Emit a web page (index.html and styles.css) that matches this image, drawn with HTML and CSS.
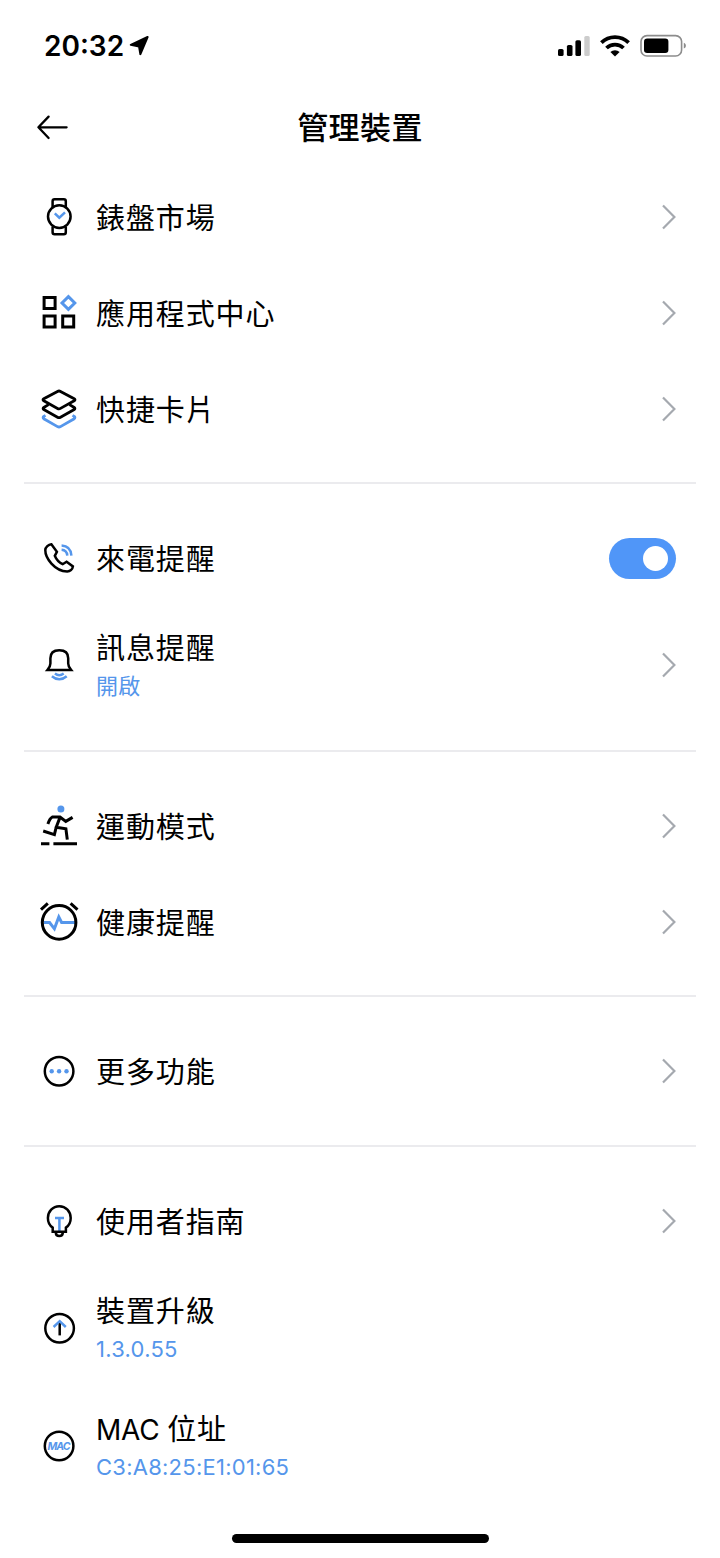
FILE: index.html
```html
<!DOCTYPE html>
<html lang="zh-Hant">
<head>
  <meta charset="UTF-8">
  <title>管理裝置</title>
  <link rel="stylesheet" href="styles.css">
</head>
<body>
  <!-- Status bar -->
  <div class="status-bar">
    <span class="time">20:32</span>
    <svg class="location" width="20" height="20" viewBox="0 0 20 20">
      <path d="M18.6 1 L11.4 18.2 L10 10.4 L1.8 8.8 Z" />
    </svg>
    <svg class="signal" width="32" height="20" viewBox="0 0 32 20">
      <rect x="0" y="13" width="5.6" height="7" rx="1.6" />
      <rect x="8.9" y="9" width="5.6" height="11" rx="1.6" />
      <rect x="17.4" y="4.2" width="5.6" height="15.8" rx="1.6" />
      <rect class="dim" x="26.3" y="0" width="5.4" height="20" rx="1.6" />
    </svg>
    <svg class="wifi" width="30" height="22" viewBox="0 0 30 22">
      <path class="wave" d="M1.4 7.7 A19.5 19.5 0 0 1 28.6 7.7" />
      <path class="wave" d="M6.5 13 A12.2 12.2 0 0 1 23.5 13" />
      <path d="M15 21.6 L10.4 17 A6.6 6.6 0 0 1 19.6 17 Z" />
    </svg>
    <svg class="battery" width="46" height="24" viewBox="0 0 46 24">
      <rect class="shell" x="1" y="1.6" width="40.6" height="20.4" rx="6" />
      <rect x="4" y="4.6" width="24.4" height="14.4" rx="3.2" />
      <path class="cap" d="M43.8 8.8 C46.6 10 46.6 13.4 43.8 14.6 Z" />
    </svg>
  </div>

  <!-- Header -->
  <div class="header">
    <svg class="back" width="32" height="26" viewBox="0 0 32 26">
      <path d="M12.6 2.6 L2.4 13.3 L12.6 24 M2.4 13.3 H30.6" />
    </svg>
    <h1>管理裝置</h1>
  </div>

  <!-- Settings list -->
  <div class="section">
    <a class="row">
      <svg class="icon" viewBox="0 0 40 40">
        <circle cx="20.3" cy="19.6" r="11.3" />
        <path d="M13.6 10 V4.2 Q13.6 2.2 15.6 2.2 H24.8 Q26.8 2.2 26.8 4.2 V10 M13.6 29.4 V35.2 Q13.6 37.2 15.6 37.2 H24.8 Q26.8 37.2 26.8 35.2 V29.4" />
        <path class="blue" d="M15.8 16.4 L20.3 20.7 L26 15.4" />
      </svg>
      <span class="label">錶盤市場</span>
      <svg class="chevron" viewBox="0 0 16 26"><path d="M2 1.4 L13.4 13 L2 24.6" /></svg>
    </a>
    <a class="row">
      <svg class="icon thick" viewBox="0 0 40 40">
        <rect x="5.1" y="4.5" width="11" height="11" />
        <rect x="5.1" y="23" width="11" height="11" />
        <rect x="23.7" y="23" width="11" height="11" />
        <path class="blue" d="M29.4 3.6 L35.8 10 L29.4 16.4 L23 10 Z" />
      </svg>
      <span class="label">應用程式中心</span>
      <svg class="chevron" viewBox="0 0 16 26"><path d="M2 1.4 L13.4 13 L2 24.6" /></svg>
    </a>
    <a class="row">
      <svg class="icon layers" viewBox="0 0 40 40">
        <path class="blue" d="M6.5 26.4 L4.8 27.4 Q3.4 28.6 4.8 29.8 L18.5 37.6 Q20 38.4 21.5 37.6 L35.2 29.8 Q36.6 28.6 35.2 27.4 L33.5 26.4" />
        <path d="M9.5 15.6 L4.8 18.5 Q3.4 19.5 4.8 20.5 L18.5 28.2 Q20 29 21.5 28.2 L35.2 20.5 Q36.6 19.5 35.2 18.5 L30.5 15.6" />
        <path d="M18.5 2.4 Q20 1.6 21.5 2.4 L35.2 9.8 Q36.8 10.8 35.2 11.8 L21.5 19.4 Q20 20.2 18.5 19.4 L4.8 11.8 Q3.2 10.8 4.8 9.8 Z" />
      </svg>
      <span class="label">快捷卡片</span>
      <svg class="chevron" viewBox="0 0 16 26"><path d="M2 1.4 L13.4 13 L2 24.6" /></svg>
    </a>
  </div>

  <div class="section">
    <div class="row">
      <svg class="icon" viewBox="0 0 40 40">
        <path d="M12.4 6.2 C9.5 6.4 6.4 9 6.3 12 C6.2 20 15.5 33 28.2 33.5 C31 33.3 33.6 31.4 33.9 28.4 L27.6 23.8 L23.7 26.2 C20 24.5 17.3 21.5 15.8 17.8 L17.9 13.8 Z" />
        <path class="blue" d="M22.6 7.5 C28.5 7.8 32 11.6 32.4 17.6 M22.6 11.8 C26 12 28 14.2 28.3 17.6" />
      </svg>
      <span class="label">來電提醒</span>
      <span class="switch"></span>
    </div>
    <a class="row tall">
      <svg class="icon" viewBox="0 0 40 40">
        <path d="M8.4 25 C10 23 11.4 21.5 11.4 18.5 V13.2 C11.4 8 14.8 5.2 20.3 5.2 C25.8 5.2 29.2 8 29.2 13.2 V18.5 C29.2 21.5 30.6 23 32.2 25 Z" />
        <path class="blue" d="M15.9 28.6 Q20.3 31.8 24.7 28.6 M12.9 31.2 Q20.3 37.4 27.7 31.2" />
      </svg>
      <span class="label">訊息提醒<small>開啟</small></span>
      <svg class="chevron" viewBox="0 0 16 26"><path d="M2 1.4 L13.4 13 L2 24.6" /></svg>
    </a>
  </div>

  <div class="section">
    <a class="row">
      <svg class="icon thick" viewBox="0 0 40 40">
        <circle class="blue-fill" cx="21.9" cy="3.1" r="3.5" />
        <path d="M8.9 18 C10 14.5 11.2 12.2 13.4 11 L21 11 L26.8 15.4 L33.6 11.4 M21 11.4 L17.2 21.2 L26.9 22.8 L28.3 33.6 M17.2 21.2 L15.4 28.6 L4.2 25" />
        <path d="M2 37.8 H10.4 M14.4 37.8 H38" />
      </svg>
      <span class="label">運動模式</span>
      <svg class="chevron" viewBox="0 0 16 26"><path d="M2 1.4 L13.4 13 L2 24.6" /></svg>
    </a>
    <a class="row">
      <svg class="icon thick" viewBox="0 0 40 40">
        <path class="blue" d="M5 20.5 H10.6 L15.4 26.8 L19.8 15 L22.6 20.5 H36" />
        <circle cx="20.1" cy="20.4" r="16.8" />
        <path d="M2 7.6 L8.8 1.4 M31.6 1.4 L38.5 7.6" />
      </svg>
      <span class="label">健康提醒</span>
      <svg class="chevron" viewBox="0 0 16 26"><path d="M2 1.4 L13.4 13 L2 24.6" /></svg>
    </a>
  </div>

  <div class="section">
    <a class="row">
      <svg class="icon" viewBox="0 0 40 40">
        <circle cx="20.1" cy="20.2" r="14.3" />
        <g class="blue-fill">
          <circle cx="12.7" cy="20.2" r="2.2" />
          <circle cx="20.1" cy="20.2" r="2.2" />
          <circle cx="27.5" cy="20.2" r="2.2" />
        </g>
      </svg>
      <span class="label">更多功能</span>
      <svg class="chevron" viewBox="0 0 16 26"><path d="M2 1.4 L13.4 13 L2 24.6" /></svg>
    </a>
  </div>

  <div class="section">
    <a class="row">
      <svg class="icon" viewBox="0 0 40 40">
        <path class="blue" d="M16 17 H25 M20.4 17 V30" />
        <path d="M13.7 30.8 V26.6 C10.4 24.4 8.9 21.2 8.9 17 C8.9 10.4 13.8 5.2 20.3 5.2 C26.8 5.2 31.7 10.4 31.7 17 C31.7 21.2 30.2 24.4 26.9 26.6 V30.8 Z" />
        <path d="M16.8 31.6 C17 36.2 23.6 36.2 23.8 31.6" />
      </svg>
      <span class="label">使用者指南</span>
      <svg class="chevron" viewBox="0 0 16 26"><path d="M2 1.4 L13.4 13 L2 24.6" /></svg>
    </a>
    <div class="row tall">
      <svg class="icon" viewBox="0 0 40 40">
        <circle cx="20.6" cy="20.2" r="14.3" />
        <path d="M20.7 14 V27.4" />
        <path class="blue" d="M14.6 19 L20.7 13.2 L26.8 19" />
      </svg>
      <span class="label">裝置升級<small>1.3.0.55</small></span>
    </div>
    <div class="row tall">
      <svg class="icon" viewBox="0 0 40 40">
        <circle cx="20.1" cy="20" r="14.3" />
        <text x="20" y="23.8" textLength="23">MAC</text>
      </svg>
      <span class="label"><span class="latin">MAC </span>位址<small>C3:A8:25:E1:01:65</small></span>
    </div>
  </div>

  <div class="home-bar"></div>
</body>
</html>
```
FILE: styles.css
```css
* {
  box-sizing: border-box;
}

body {
  display: flex;
  flex-direction: column;
  height: 1558px;
  margin: 0;
  background: #fff;
  color: #000;
  font-family: Inter, "Noto Sans CJK TC", sans-serif;
}

svg {
  flex: none;
}

.status-bar {
  display: flex;
  align-items: center;
  height: 92px;
  padding: 0 34px 0 44px;
}

.time {
  width: 85px;
  font-size: 28px;
  font-weight: 600;
}

.location {
  stroke: #000;
  stroke-width: 2;
  stroke-linejoin: round;
}

.signal {
  margin-left: auto;
}

.signal .dim {
  fill: #ccc;
}

.wifi {
  margin: 0 10px;
}

.wifi .wave {
  fill: none;
  stroke: #000;
  stroke-width: 3.8;
}

.battery .shell {
  fill: none;
  stroke: #8c8c8c;
  stroke-width: 1.6;
}

.battery .cap {
  fill: #8c8c8c;
}

.header {
  display: grid;
  grid-template-columns: 60px 1fr 60px;
  align-items: center;
  height: 76.5px;
  padding: 0 36px 6px;
}

.back {
  fill: none;
  stroke: #000;
  stroke-width: 2.3;
  stroke-linecap: round;
  stroke-linejoin: round;
}

h1 {
  margin: -3px 0 0;
  font-size: 31px;
  font-weight: 500;
  letter-spacing: 0.4px;
  text-align: center;
}

.section {
  margin: 0 24px;
  padding-bottom: 25.5px;
}

.section + .section {
  padding-top: 26px;
  border-top: 2px solid #ebebee;
}

.row {
  display: flex;
  align-items: center;
  height: 96px;
  padding: 0 20px 0 15px;
}

.row.tall {
  height: 118px;
}

.icon {
  width: 40px;
  height: 40px;
  overflow: visible;
  fill: none;
  stroke: #000;
  stroke-width: 2.5;
}

.icon.thick {
  stroke-width: 3;
}

.icon.layers {
  stroke-width: 2.8;
}

.icon .blue {
  stroke: #5596eb;
}

.icon .blue-fill {
  fill: #5596eb;
  stroke: none;
}

.icon text {
  fill: #5596eb;
  stroke: none;
  font-size: 10.5px;
  font-style: italic;
  font-weight: 700;
  text-anchor: middle;
}

.label {
  flex: 1;
  margin-left: 17px;
  padding-top: 4px;
  font-size: 29px;
  line-height: 42px;
  letter-spacing: 0.9px;
}

.tall .label {
  padding-top: 1px;
}

.label .latin {
  font-size: 28px;
  letter-spacing: -0.2px;
}

.label small {
  display: block;
  color: #5596eb;
  font-size: 22px;
  line-height: 33px;
  letter-spacing: 0.25px;
}

.chevron {
  width: 16px;
  height: 26px;
  margin-right: -1px;
  fill: none;
  stroke: #a5a9af;
  stroke-width: 2.2;
}

.switch {
  display: flex;
  align-items: center;
  justify-content: flex-end;
  width: 67px;
  height: 41px;
  padding-right: 8px;
  border-radius: 21px;
  background: #5096f8;
}

.switch::after {
  content: "";
  width: 25px;
  height: 25px;
  border-radius: 50%;
  background: #fff;
}

.home-bar {
  width: 257px;
  height: 9px;
  margin: auto auto 15px;
  border-radius: 5px;
  background: #000;
}
```
